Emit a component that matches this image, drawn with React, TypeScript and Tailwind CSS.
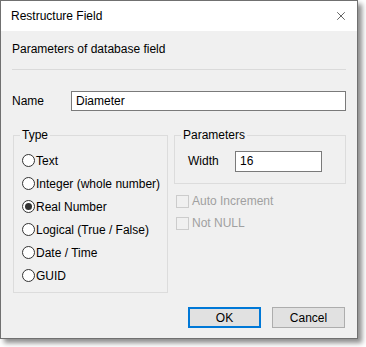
import { X } from "lucide-react";

const font = { fontFamily: '"Liberation Sans", Arial, sans-serif' };

const types = [
  { label: "Text", checked: false },
  { label: "Integer (whole number)", checked: false },
  { label: "Real Number", checked: true },
  { label: "Logical (True / False)", checked: false },
  { label: "Date / Time", checked: false },
  { label: "GUID", checked: false },
];

function Radio({ label, checked }: { label: string; checked: boolean }) {
  return (
    <div className="flex h-[23px] items-center">
      <span className="flex h-[13px] w-[13px] items-center justify-center rounded-full border border-[#333333] bg-white">
        {checked && <span className="h-[7px] w-[7px] rounded-full bg-[#333333]" />}
      </span>
      <span className="ml-px text-[12px] text-black">{label}</span>
    </div>
  );
}

function Check({ label }: { label: string }) {
  return (
    <div className="flex h-[22px] items-center">
      <span className="h-[13px] w-[13px] border border-[#cccccc] bg-[#f0f0f0]" />
      <span className="ml-[3px] text-[12px] text-[#a0a0a0]">{label}</span>
    </div>
  );
}

export default function App() {
  return (
    <div className="h-[347px] w-[366px] bg-white" style={font}>
      <div className="flex h-[339px] w-[358px] flex-col border border-[#707070] shadow-[4px_4px_5px_rgba(0,0,0,0.45)]">
        <div className="flex h-[30px] shrink-0 items-center justify-between bg-white pl-[10px] pr-[9px]">
          <span className="text-[12px] text-black">Restructure Field</span>
          <X className="h-[14px] w-[14px] text-[#222222]" strokeWidth={1.2} />
        </div>

        <div className="flex flex-1 flex-col bg-[#f0f0f0] px-[11px]">
          <div className="mt-[10px] h-[16px] text-[12px] leading-[16px] text-black">
            Parameters of database field
          </div>
          <div className="mt-[12px] h-px bg-[#dadada]" />

          <div className="mt-[21px] flex h-[20px] items-center">
            <span className="w-[59px] text-[12px] text-black">Name</span>
            <div className="flex h-[20px] flex-1 items-center border border-[#7a7a7a] bg-white px-[4px] text-[12px] text-black">
              Diameter
            </div>
          </div>

          <div className="mt-[16px] flex gap-[6px]">
            <fieldset className="ml-px h-[166px] w-[157px] border border-[#dcdcdc] p-0">
              <legend className="ml-[6px] px-[2px] text-[12px] leading-[16px] text-black">
                Type
              </legend>
              <div className="mt-[6px] flex flex-col pl-[8px]">
                {types.map((t) => (
                  <Radio key={t.label} label={t.label} checked={t.checked} />
                ))}
              </div>
            </fieldset>

            <div className="flex flex-1 flex-col">
              <fieldset className="h-[57px] w-[172px] border border-[#dcdcdc] p-0">
                <legend className="ml-[6px] px-[2px] text-[12px] leading-[16px] text-black">
                  Parameters
                </legend>
                <div className="mt-[8px] flex h-[20px] items-center pl-[13px]">
                  <span className="w-[47px] text-[12px] text-black">Width</span>
                  <div className="flex h-[21px] w-[87px] items-center border border-[#7a7a7a] bg-white px-[4px] text-[12px] text-black">
                    16
                  </div>
                </div>
              </fieldset>
              <div className="ml-[2px] mt-[6px] flex flex-col">
                <Check label="Auto Increment" />
                <Check label="Not NULL" />
              </div>
            </div>
          </div>

          <div className="mt-[14px] flex justify-end gap-[11px] pr-[1px]">
            <button className="h-[21px] w-[73px] border-2 border-[#0078d7] bg-[#e1e1e1] text-[12px] text-black">
              OK
            </button>
            <button className="h-[21px] w-[73px] border border-[#adadad] bg-[#e1e1e1] text-[12px] text-black">
              Cancel
            </button>
          </div>
        </div>
      </div>
    </div>
  );
}
